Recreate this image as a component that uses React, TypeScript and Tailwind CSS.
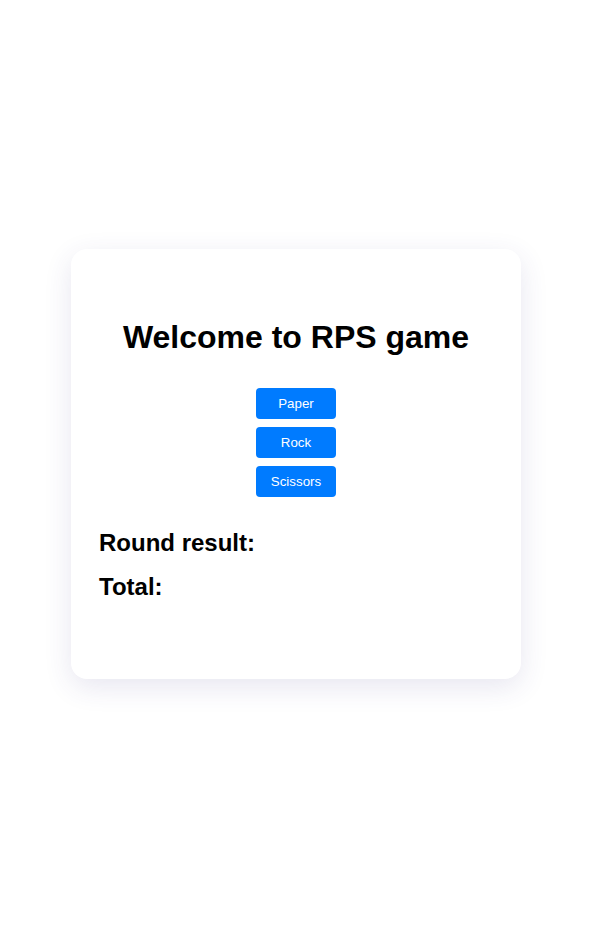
import { useState } from "react";

const choices = ["Paper", "Rock", "Scissors"];

export default function App() {
  const [round, setRound] = useState("");
  const [total, setTotal] = useState("");

  const play = (choice: string) => {
    setRound(choice);
    setTotal(total);
  };

  return (
    <div className="flex h-[929px] w-full items-center justify-center bg-white pb-[2px] pl-[2px] font-['Liberation_Sans',Arial,sans-serif] text-black">
      <div className="flex h-[430px] w-[450px] flex-col rounded-2xl bg-white px-7 pt-[70px] shadow-[0_8px_28px_rgba(60,50,130,0.12)]">
        <h1 className="text-center text-[32px] font-bold leading-[37px]">Welcome to RPS game</h1>

        <div className="mt-8 flex flex-col items-center gap-2">
          {choices.map((c) => (
            <button
              key={c}
              type="button"
              onClick={() => play(c)}
              className="h-[31px] w-20 rounded bg-[#007bff] pt-[2px] text-[13.33px] text-white"
            >
              {c}
            </button>
          ))}
        </div>

        <h2 className="mt-8 text-2xl font-bold leading-[28px]">Round result: {round && ""}</h2>
        <h2 className="mt-4 text-2xl font-bold leading-[28px]">Total: {total}</h2>
      </div>
    </div>
  );
}
